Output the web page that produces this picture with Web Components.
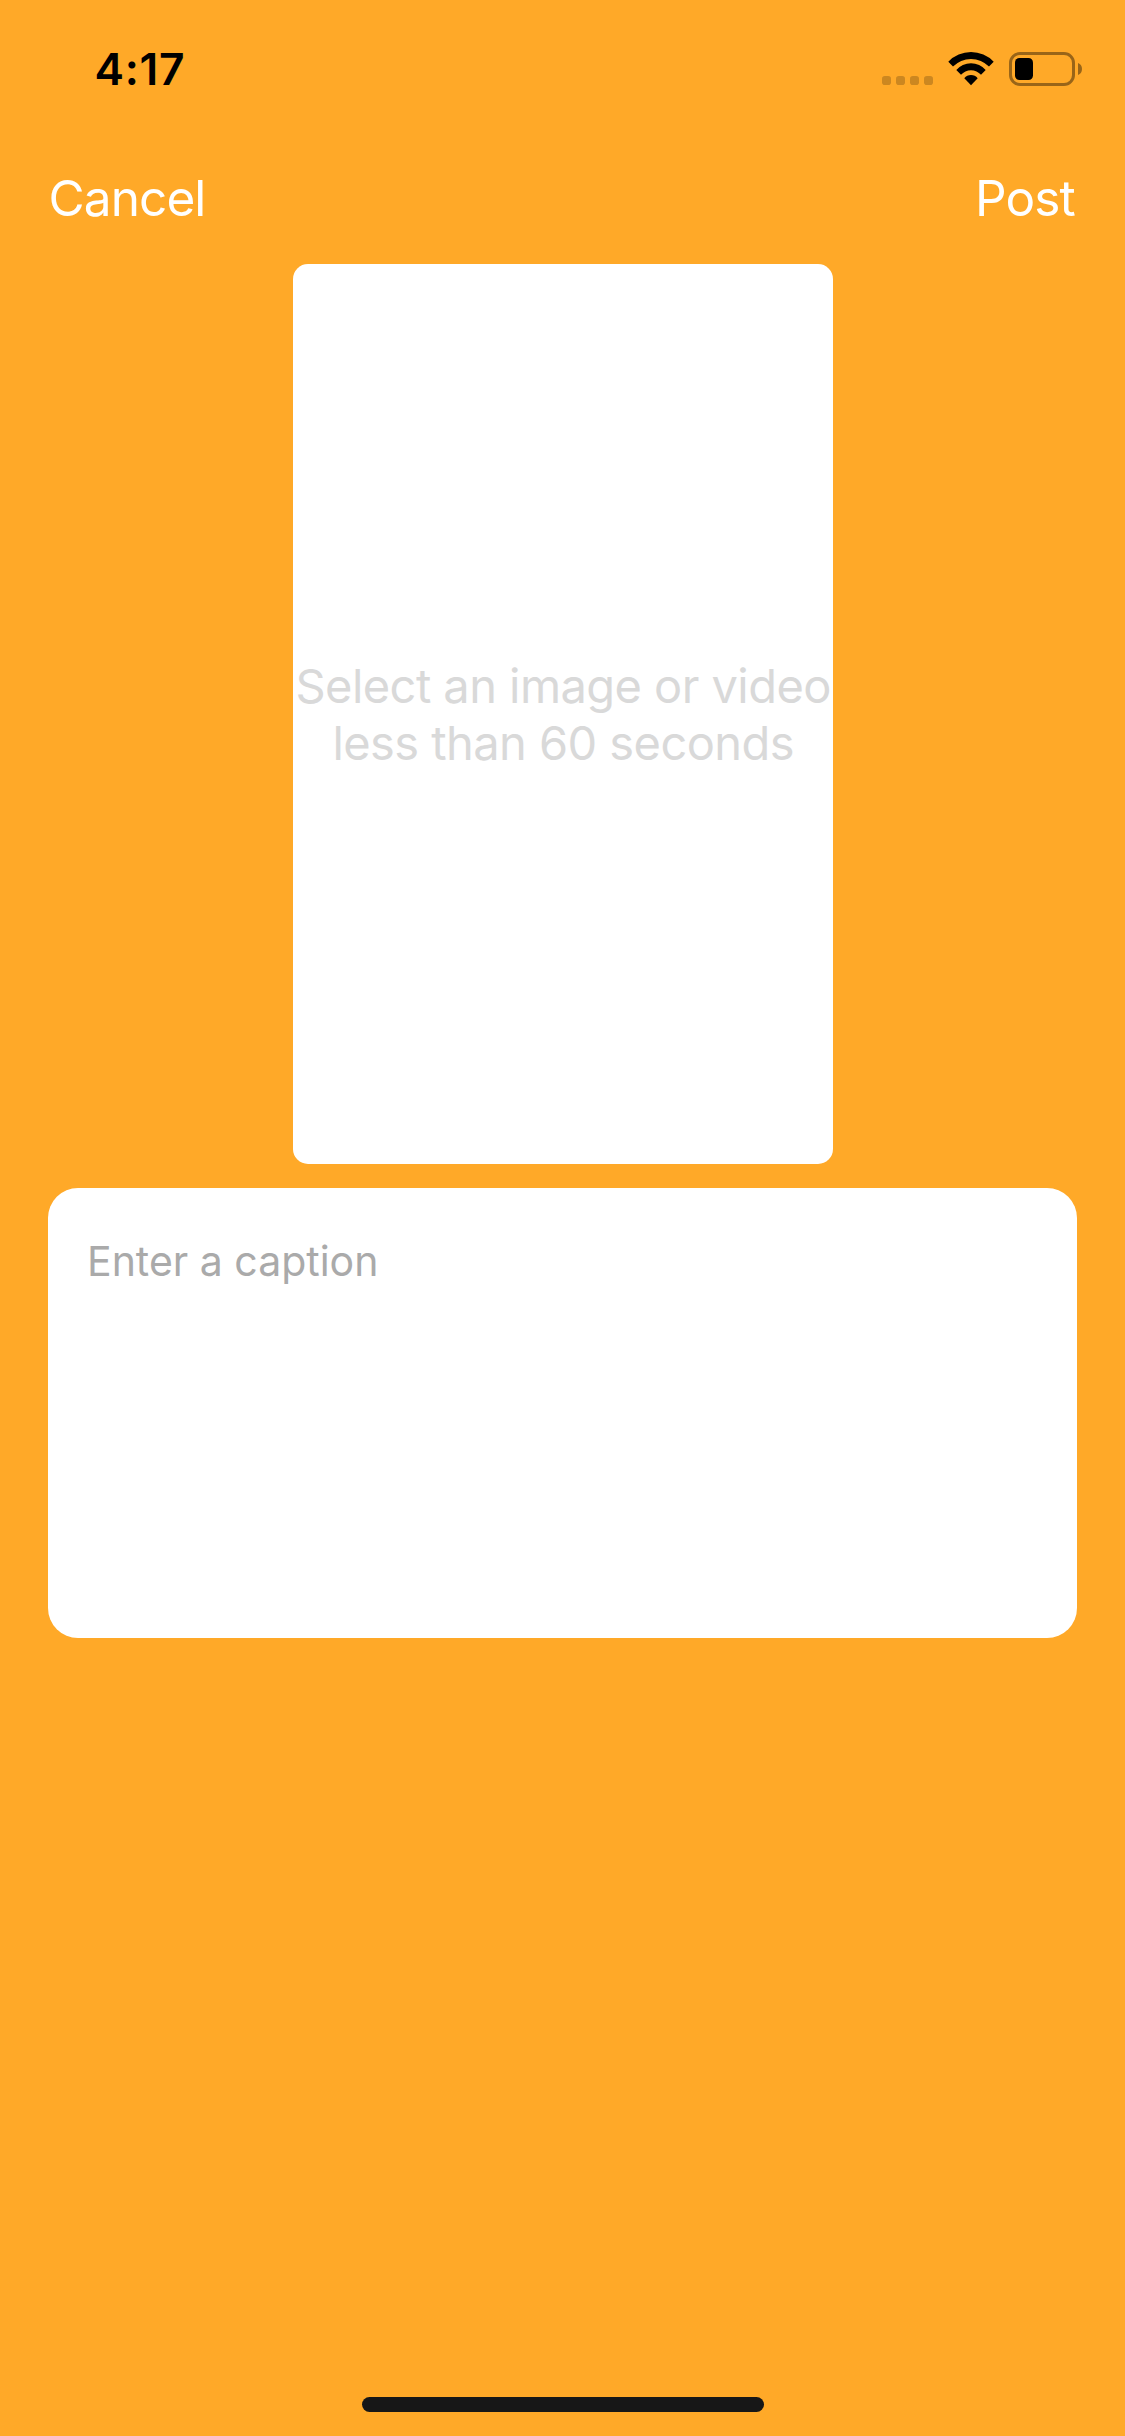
<!DOCTYPE html>
<html lang="en">
<head>
<meta charset="utf-8">
<title>New post</title>
<style>
html, body { margin: 0; background: #ffa928; }
body { font-family: Inter, "Liberation Sans", sans-serif; }
</style>
</head>
<body>
<post-screen></post-screen>
<script>
const define = (name, html) => {
  const template = document.createElement('template');
  template.innerHTML = html;
  customElements.define(name, class extends HTMLElement {
    constructor() {
      super();
      this.attachShadow({ mode: 'open' }).append(template.content.cloneNode(true));
    }
  });
};

define('status-bar', `
<style>
:host { display: flex; justify-content: space-between; box-sizing: border-box; height: 132px; padding: 40px 35px 0 94.5px; color: #000; }
.time { font-size: 44.3px; font-weight: 600; line-height: 58px; height: 58px; letter-spacing: 0.7px; white-space: nowrap; }
svg { display: block; }
</style>
<span class="time">4:17</span>
<svg width="220" height="60" viewBox="870 40 220 60">
  <g fill="#000" fill-opacity=".2">
    <rect x="882" y="76" width="9" height="9" rx="2.8"/>
    <rect x="896" y="76" width="9" height="9" rx="2.8"/>
    <rect x="910" y="76" width="9" height="9" rx="2.8"/>
    <rect x="924" y="76" width="9" height="9" rx="2.8"/>
  </g>
  <path d="M948.3 61.7A31.5 31.5 0 0 1 993.7 61.7L989 66.6A25 25 0 0 0 953 66.6Z"/>
  <path d="M956.3 70A19.3 19.3 0 0 1 985.7 70L981 74.8A13.2 13.2 0 0 0 961 74.8Z"/>
  <path d="M964.3 78.2A8.7 8.7 0 0 1 977.7 78.2L971 85.2Z"/>
  <rect x="1010.5" y="53.5" width="63" height="31" rx="9.5" fill="none" stroke="#000" stroke-opacity=".4" stroke-width="3"/>
  <rect x="1015" y="58" width="18" height="22" rx="4.5"/>
  <path d="M1078 63A6.5 6.5 0 0 1 1078 75Z" fill-opacity=".4"/>
</svg>`);

define('nav-action', `
<style>
:host { display: block; color: #fff; font-size: 49.5px; line-height: 60px; letter-spacing: -0.9px; white-space: nowrap; }
</style><slot></slot>`);

define('nav-bar', `
<style>
:host { display: flex; justify-content: space-between; box-sizing: border-box; height: 132px; padding: 36px 50.2px 0 48.5px; }
</style><slot></slot>`);

define('media-picker', `
<style>
:host { display: flex; align-items: center; justify-content: center; flex: none; align-self: center; width: 540px; height: 900px; border-radius: 15px; background: #fff; color: #d9d9d9; }
div { font-size: 47px; line-height: 57px; letter-spacing: -0.56px; padding-left: 1.4px; text-align: center; white-space: nowrap; }
::slotted(span) { display: block; }
</style><div><slot></slot></div>`);

define('caption-field', `
<style>
:host { display: block; flex: none; box-sizing: border-box; height: 450px; margin: 24px 48px 0; padding: 48px 39px; border-radius: 30px; background: #fff; color: #aaa; font-size: 41px; line-height: 50px; }
</style><slot></slot>`);

define('home-indicator', `
<style>
:host { display: block; align-self: center; width: 402px; height: 15px; margin: auto 0 24px; border-radius: 7.5px; background: #171717; }
</style>`);

define('post-screen', `
<style>
:host { display: flex; flex-direction: column; width: 1125px; height: 2436px; background: #ffa928; overflow: hidden; }
</style>
<status-bar></status-bar>
<nav-bar><nav-action>Cancel</nav-action><nav-action>Post</nav-action></nav-bar>
<media-picker><span>Select an image or video</span><span>less than 60 seconds</span></media-picker>
<caption-field>Enter a caption</caption-field>
<home-indicator></home-indicator>`);
</script>
</body>
</html>
